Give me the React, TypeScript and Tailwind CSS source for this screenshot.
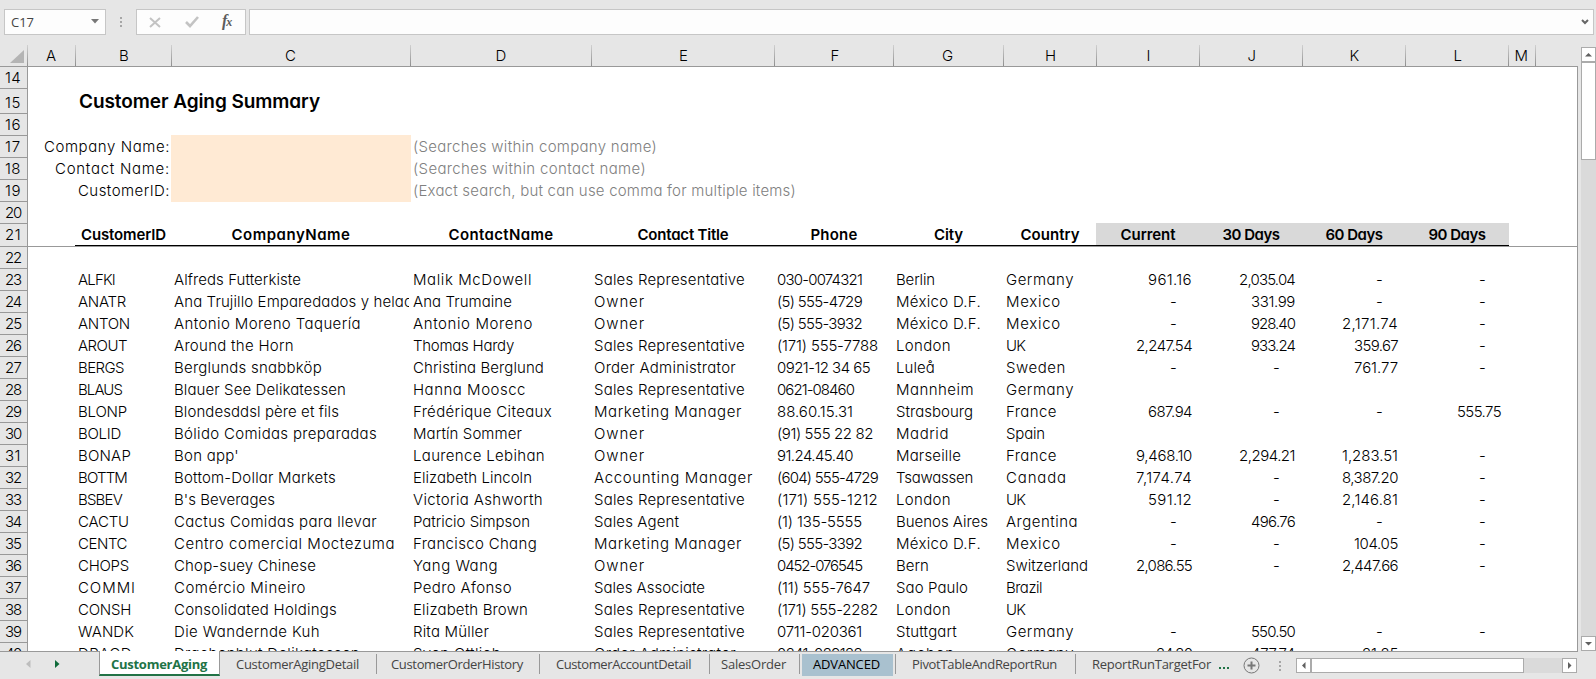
import { useLayoutEffect, useRef, useState } from "react";
import type { ReactNode } from "react";

/* Advance widths (1/1000 em) of the worksheet's geometric sans. */
const ADVANCE: Record<string, number> = {
  a: 683, b: 682, c: 647, d: 685, e: 650, f: 314, g: 673, h: 610, i: 200, j: 203, k: 502, l: 200, m: 880,
  n: 610, o: 655, p: 682, q: 682, r: 301, s: 388, t: 339, u: 608, v: 600, w: 930, x: 480, y: 536, z: 425,
  A: 740, B: 574, C: 813, D: 744, E: 536, F: 485, G: 872, H: 683, I: 226, J: 482, K: 591, L: 462, M: 1000,
  N: 740, O: 869, P: 592, Q: 871, R: 607, S: 498, T: 426, U: 655, V: 702, W: 960, X: 609, Y: 592, Z: 480,
  " ": 277, "-": 332, ".": 277, ",": 277, "(": 369, ")": 369, ":": 277, "'": 198,
};

function sheetWidth(text: string, size = 15): number {
  return Array.from(text.normalize("NFD").replace(/[\u0300-\u036f]/g, "")).reduce(
    (sum, ch) => sum + Math.round(((ADVANCE[ch] ?? 554) * size) / 1000),
    0,
  );
}

/* Spaces its letters so the run takes up exactly `width` pixels. */
function Fit({ text, width, className = "" }: { text: string; width?: number; className?: string }) {
  const ref = useRef<HTMLSpanElement>(null);
  const [spacing, setSpacing] = useState(0);
  const target = width ?? sheetWidth(text);
  useLayoutEffect(() => {
    const el = ref.current;
    if (!el || !text) return;
    setSpacing((target - el.getBoundingClientRect().width) / text.length);
  }, [text, target]);
  return (
    <span ref={ref} className={`inline-block whitespace-pre ${className}`}>
      <span style={{ letterSpacing: `${spacing}px` }}>{text}</span>
    </span>
  );
}

const GRID =
  "grid grid-cols-[28px_48px_96px_239px_181px_183px_119px_110px_93px_103px_103px_103px_103px_27px_1fr]";

type Row = [string, string, string, string, string, string, string, string, string, string, string];

const ROWS: Row[] = [
  ["ALFKI", "Alfreds Futterkiste", "Malik McDowell", "Sales Representative", "030-0074321", "Berlin", "Germany", "961.16", "2,035.04", "-", "-"],
  ["ANATR", "Ana Trujillo Emparedados y helados", "Ana Trumaine", "Owner", "(5) 555-4729", "México D.F.", "Mexico", "-", "331.99", "-", "-"],
  ["ANTON", "Antonio Moreno Taquería", "Antonio Moreno", "Owner", "(5) 555-3932", "México D.F.", "Mexico", "-", "928.40", "2,171.74", "-"],
  ["AROUT", "Around the Horn", "Thomas Hardy", "Sales Representative", "(171) 555-7788", "London", "UK", "2,247.54", "933.24", "359.67", "-"],
  ["BERGS", "Berglunds snabbköp", "Christina Berglund", "Order Administrator", "0921-12 34 65", "Luleå", "Sweden", "-", "-", "761.77", "-"],
  ["BLAUS", "Blauer See Delikatessen", "Hanna Mooscc", "Sales Representative", "0621-08460", "Mannheim", "Germany", "", "", "", ""],
  ["BLONP", "Blondesddsl père et fils", "Frédérique Citeaux", "Marketing Manager", "88.60.15.31", "Strasbourg", "France", "687.94", "-", "-", "555.75"],
  ["BOLID", "Bólido Comidas preparadas", "Martín Sommer", "Owner", "(91) 555 22 82", "Madrid", "Spain", "", "", "", ""],
  ["BONAP", "Bon app'", "Laurence Lebihan", "Owner", "91.24.45.40", "Marseille", "France", "9,468.10", "2,294.21", "1,283.51", "-"],
  ["BOTTM", "Bottom-Dollar Markets", "Elizabeth Lincoln", "Accounting Manager", "(604) 555-4729", "Tsawassen", "Canada", "7,174.74", "-", "8,387.20", "-"],
  ["BSBEV", "B's Beverages", "Victoria Ashworth", "Sales Representative", "(171) 555-1212", "London", "UK", "591.12", "-", "2,146.81", "-"],
  ["CACTU", "Cactus Comidas para llevar", "Patricio Simpson", "Sales Agent", "(1) 135-5555", "Buenos Aires", "Argentina", "-", "496.76", "-", "-"],
  ["CENTC", "Centro comercial Moctezuma", "Francisco Chang", "Marketing Manager", "(5) 555-3392", "México D.F.", "Mexico", "-", "-", "104.05", "-"],
  ["CHOPS", "Chop-suey Chinese", "Yang Wang", "Owner", "0452-076545", "Bern", "Switzerland", "2,086.55", "-", "2,447.66", "-"],
  ["COMMI", "Comércio Mineiro", "Pedro Afonso", "Sales Associate", "(11) 555-7647", "Sao Paulo", "Brazil", "", "", "", ""],
  ["CONSH", "Consolidated Holdings", "Elizabeth Brown", "Sales Representative", "(171) 555-2282", "London", "UK", "", "", "", ""],
  ["WANDK", "Die Wandernde Kuh", "Rita Müller", "Sales Representative", "0711-020361", "Stuttgart", "Germany", "-", "550.50", "-", "-"],
  ["DRACD", "Drachenblut Delikatessen", "Sven Ottlieb", "Order Administrator", "0241-039123", "Aachen", "Germany", "24.20", "477.74", "21.25", ""],
];

const HEADERS: [string, number, boolean][] = [
  ["CustomerID", 85, false], ["CompanyName", 119, false], ["ContactName", 105, false], ["Contact Title", 91, false],
  ["Phone", 47, false], ["City", 29, false], ["Country", 59, false],
  ["Current", 55, true], ["30 Days", 57, true], ["60 Days", 57, true], ["90 Days", 57, true],
];

function RowHead({ n }: { n: number }) {
  return (
    <div className={`flex items-center justify-end overflow-hidden border-r border-b border-[#999] bg-[#e6e6e6] pr-[6px] ${n === 15 ? "pt-[3px]" : ""}`}>
      <Fit text={String(n)} width={16} />
    </div>
  );
}

function DataRow({ row, n }: { row: Row; n: number }) {
  return (
    <div className={`${GRID} h-[22px]`}>
      <RowHead n={n} />
      <div />
      {row.slice(0, 7).map((t, i) => (
        <div key={i} className="mr-[2px] flex items-center overflow-hidden pb-px pl-[2px]">
          <Fit text={t} />
        </div>
      ))}
      {row.slice(7).map((t, i) => (
        <div key={i} className={`flex items-center justify-end pb-px ${t === "-" ? "pr-[25px]" : "pr-[8px]"}`}>
          {t && <Fit text={t} />}
        </div>
      ))}
    </div>
  );
}

function FilterRow({ n, label, labelWidth, hint, hintWidth }: { n: number; label: string; labelWidth: number; hint: string; hintWidth: number }) {
  return (
    <div className="flex h-[22px]">
      <div className="grid w-7 shrink-0"><RowHead n={n} /></div>
      <div className="flex w-[143px] items-center justify-end pr-[1px] pb-px"><Fit text={label} width={labelWidth} /></div>
      <div className="-mt-px w-[240px] bg-[#ffead4]" />
      <div className="flex items-center pb-px pl-[2px] text-[#808080]"><Fit text={hint} width={hintWidth} /></div>
    </div>
  );
}

function ScrollButton({ d, className }: { d: string; className: string }) {
  return (
    <div className={`flex shrink-0 items-center justify-center border border-[#ababab] bg-white ${className}`}>
      <svg width="9" height="9" viewBox="0 0 9 9" fill="#606060"><path d={d} /></svg>
    </div>
  );
}

function Tab({ text, width, className }: { text: string; width: number; className: string }) {
  return (
    <div className={`flex h-5 shrink-0 items-center border-r border-[#999] ${className}`}>
      <Fit text={text} width={width} />
    </div>
  );
}

function Dots({ className }: { className: string }) {
  return (
    <svg className={className} width="2" height="10" fill="#a6a6a6">
      <rect width="2" height="2" /><rect y="4" width="2" height="2" /><rect y="8" width="2" height="2" />
    </svg>
  );
}

function Letter({ children }: { children?: ReactNode }) {
  return (
    <div className="relative flex items-center justify-center pr-px">
      {children}
      <div className="absolute top-0 right-0 h-full w-px bg-linear-to-b from-[#d0d0d0] to-[#8f8f8f]" />
    </div>
  );
}

export default function App() {
  return (
    <div className="flex h-[679px] w-[1596px] flex-col overflow-hidden bg-[#e6e6e6] font-['Inter','Noto_Sans',sans-serif] text-[15px] leading-[20px] font-light text-black [font-feature-settings:'cv11']">
      <div className="flex h-[45px] shrink-0 pt-[9px] pl-1 font-['Open_Sans',sans-serif] text-[13px] font-normal text-[#444]">
        <div className="flex h-[26px] w-[102px] items-center justify-between border border-[#c6c6c6] bg-[#fdfdfd] pr-[6px] pl-[6px]">
          <Fit text="C17" width={23} />
          <svg className="mb-[2px]" width="8" height="5" fill="#777"><path d="M0 0h8L4 4.5z" /></svg>
        </div>
        <Dots className="mt-2 ml-[14px]" />
        <div className="ml-[14px] flex h-[26px] w-[110px] items-center border border-[#c6c6c6] bg-[#fdfdfd]">
          <svg className="ml-[12px]" width="12" height="11" fill="none" stroke="#c3c3c3" strokeWidth="2"><path d="M1 1l10 9M11 1L1 10" /></svg>
          <svg className="ml-[24px]" width="14" height="12" fill="none" stroke="#c3c3c3" strokeWidth="2.6"><path d="M1 6l4 4L13 1" /></svg>
          <div className="mb-[2px] ml-[23px] flex items-baseline font-['Liberation_Serif',serif] text-[16px] font-bold text-[#5c5c5c] italic">
            f<span className="-ml-px text-[12px]">x</span>
          </div>
        </div>
        <div className="ml-[3px] flex h-[26px] w-[1345px] items-center justify-end border border-[#c6c6c6] bg-[#fdfdfd] pr-[4px]">
          <svg width="8" height="6" fill="none" stroke="#666" strokeWidth="2"><path d="M1 1l3 3 3-3" /></svg>
        </div>
      </div>

      <div className="flex h-[607px] shrink-0">
        <div className="flex w-[1578px] shrink-0 flex-col">
          <div className={`${GRID} h-[22px] shrink-0 border-b border-[#999]`}>
            <div className="relative flex items-end justify-end pr-[4px] pb-[3px]">
              <svg width="14" height="13" fill="#b4b4b4"><path d="M14 0v13H0z" /></svg>
              <div className="absolute top-0 right-0 h-full w-px bg-linear-to-b from-[#d0d0d0] to-[#8f8f8f]" />
            </div>
            {"ABCDEFGHIJKLM".split("").map((c) => (
              <Letter key={c}><Fit text={c} /></Letter>
            ))}
            <div />
          </div>
          <div className="flex h-[585px] flex-col overflow-hidden border-r border-b border-[#999] bg-white *:shrink-0">
            <div className={`${GRID} h-[22px]`}><RowHead n={14} /></div>
            <div className="flex h-[25px]">
              <div className="grid w-7 shrink-0"><RowHead n={15} /></div>
              <div className="flex items-center pt-px pl-[51px] text-[19px] font-semibold"><Fit text="Customer Aging Summary" width={241} /></div>
            </div>
            <div className={`${GRID} h-[22px]`}><RowHead n={16} /></div>
            <FilterRow n={17} label="Company Name:" labelWidth={126} hint="(Searches within company name)" hintWidth={244} />
            <FilterRow n={18} label="Contact Name:" labelWidth={115} hint="(Searches within contact name)" hintWidth={233} />
            <FilterRow n={19} label="CustomerID:" labelWidth={92} hint="(Exact search, but can use comma for multiple items)" hintWidth={383} />
            <div className={`${GRID} h-[22px]`}><RowHead n={20} /></div>
            <div className={`${GRID} h-[23px]`}>
              <RowHead n={21} />
              <div className="border-b border-[#999]" />
              {HEADERS.map(([t, w, shaded]) => (
                <div key={t} className={`-mt-px -ml-px flex flex-col border-b border-[#999] font-semibold ${shaded ? "bg-[#d9d9d9]" : ""}`}>
                  <div className="flex h-[23px] items-center justify-center border-b border-black pt-px"><Fit text={t} width={w} /></div>
                </div>
              ))}
              <div className="border-b border-[#999]" /><div className="border-b border-[#999]" />
            </div>
            <div className={`${GRID} h-[22px]`}><RowHead n={22} /></div>
            {ROWS.map((r, i) => <DataRow key={r[0]} row={r} n={23 + i} />)}
          </div>
        </div>
        <div className="ml-[3px] flex w-[15px] flex-col pt-[2px] pb-px">
          <ScrollButton className="h-[15px]" d="M1 6.5L4.5 3L8 6.5z" />
          <div className="h-[98px] border border-[#ababab] bg-white" />
          <div className="flex-1 bg-[#dadada]" />
          <ScrollButton className="h-[15px]" d="M1 3L4.5 6.5L8 3z" />
        </div>
      </div>

      <div className="flex h-[27px] shrink-0 font-['Open_Sans',sans-serif] text-[13px] font-normal text-[#444] [font-feature-settings:normal]">
        <div className="flex w-[99px] pt-[8px]">
          <svg className="ml-[26px]" width="5" height="8" fill="#bdbdbd"><path d="M4.5 0v8L0 4z" /></svg>
          <svg className="ml-[24px]" width="5" height="8" fill="#0f6b3a"><path d="M0 0v8l4.5-4z" /></svg>
        </div>
        <div className="-mt-px flex h-[25px] w-[121px] items-center border-x border-b-2 border-x-[#999] border-b-[#217346] bg-white pt-[3px] pl-[11px] font-bold text-[#217346]">
          <Fit text="CustomerAging" width={96} />
        </div>
        <div className="flex pt-[2px]">
          <Tab text="CustomerAgingDetail" width={123} className="w-[157px] pl-4" />
          <Tab text="CustomerOrderHistory" width={132} className="w-[163px] pl-[14px]" />
          <Tab text="CustomerAccountDetail" width={135} className="w-[170px] pl-4" />
          <Tab text="SalesOrder" width={65} className="w-[90px] pl-[11px]" />
          <div className="mx-[2px] flex h-[22px] w-[91px] items-center bg-[#a9c1cf] pb-[2px] pl-[11px] text-black"><Fit text="ADVANCED" width={67} /></div>
          <Tab text="" width={0} className="w-[1px]" />
          <Tab text="PivotTableAndReportRun" width={145} className="w-[180px] pl-4" />
          <div className="flex h-5 w-[143px] items-center pl-4">
            <Fit text="ReportRunTargetFor" width={119} />
          </div>
        </div>
        <div className="flex h-[27px] flex-1 items-center">
          <svg width="11" height="2" className="mt-[5px]" fill="#217346"><path d="M0 0h2v2H0zM4 0h2v2H4zM8 0h2v2H8z" /></svg>
          <svg className="ml-[13px]" width="17" height="17" fill="none" stroke="#777"><circle cx="8.5" cy="8.5" r="7.5" /><path strokeWidth="2" d="M8.5 4.5v8M4.5 8.5h8" /></svg>
          <Dots className="ml-[19px]" />
          <ScrollButton className="ml-[15px] h-[15px] w-[15px]" d="M6.5 1L3 4.5L6.5 8z" />
          <div className="h-[15px] w-[213px] shrink-0 border border-[#ababab] bg-white" />
          <div className="h-[15px] w-[38px] shrink-0 bg-[#dadada]" />
          <ScrollButton className="h-[15px] w-[15px]" d="M3 1L6.5 4.5L3 8z" />
        </div>
      </div>
    </div>
  );
}
